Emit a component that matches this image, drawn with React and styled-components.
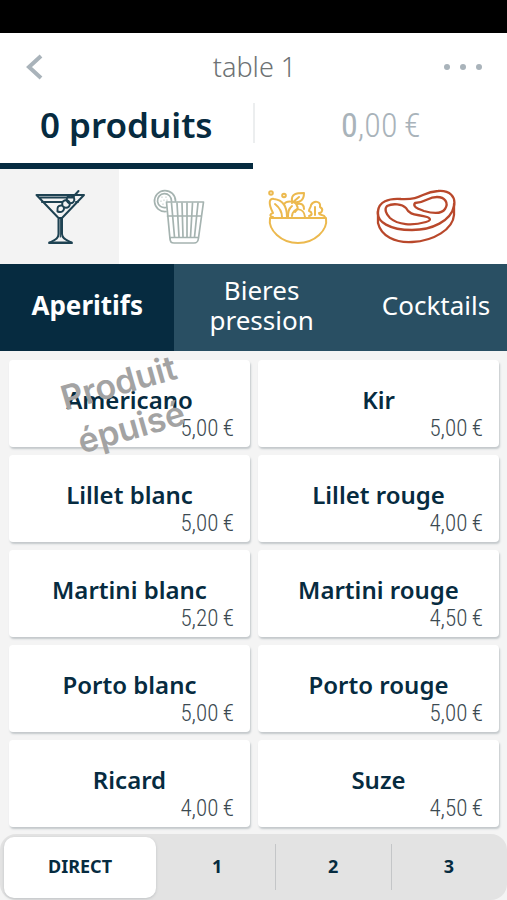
import React, { useState } from "react";
import styled, { createGlobalStyle, ThemeProvider } from "styled-components";

const theme = {
  navy: "#062b40",
  blue: "#294f63",
  muted: "#a9b3ba",
  page: "#f4f4f4",
  bar: "#e3e3e3",
  narrow: '"Roboto Condensed", Roboto, sans-serif',
};

const GlobalStyle = createGlobalStyle`
  * {
    box-sizing: border-box;
  }
  body {
    margin: 0;
    background: #f4f4f4;
    font-family: "Noto Sans", "Open Sans", sans-serif;
  }
  button {
    border: none;
    padding: 0;
    background: none;
    font-family: inherit;
    color: inherit;
    cursor: pointer;
  }
`;

const Page = styled.div`
  display: flex;
  flex-direction: column;
  min-height: 100vh;
  overflow: hidden;
  background: ${({ theme }) => theme.page};
  color: ${({ theme }) => theme.navy};
`;

const StatusBar = styled.div`
  height: 33px;
  background: #000;
`;

const Header = styled.header`
  display: grid;
  grid-template-columns: 1fr auto 1fr;
  align-items: center;
  height: 68px;
  padding: 0 24px 0 26px;
  background: #fff;
`;

const IconButton = styled.button`
  display: flex;
  align-items: center;
  justify-content: ${({ $end }) => ($end ? "flex-end" : "flex-start")};
  height: 44px;
  color: ${({ theme }) => theme.muted};
`;

const Title = styled.h1`
  margin: 0;
  text-align: center;
  font-size: 27px;
  line-height: 40px;
  font-weight: 300;
  color: #6d7274;
`;

const Summary = styled.div`
  display: flex;
  height: 68px;
  background: #fff;
`;

const SummaryTab = styled.button`
  flex: 1;
  display: flex;
  align-items: center;
  justify-content: center;
  border-bottom: 6px solid
    ${({ $active, theme }) => ($active ? theme.navy : "transparent")};
  padding-bottom: 14px;
  font-size: 35px;
  line-height: 48px;
  font-weight: 600;
`;

const Divider = styled.div`
  width: 2px;
  height: 40px;
  margin-top: 2px;
  background: #eceeef;
`;

const Total = styled.span`
  font-family: ${({ theme }) => theme.narrow};
  font-size: 34px;
  font-weight: 300;
  color: ${({ theme }) => theme.muted};
`;

const Families = styled.nav`
  display: flex;
  height: 95px;
  background: #fff;
`;

const FamilyTab = styled.button`
  flex: 0 0 23.5%;
  display: flex;
  align-items: center;
  justify-content: center;
  background: ${({ $active }) => ($active ? "#f3f3f3" : "#fff")};
  color: ${({ $color }) => $color};
`;

const Categories = styled.nav`
  display: flex;
  height: 87px;
  overflow: hidden;
  background: ${({ theme }) => theme.blue};
`;

const CategoryTab = styled.button`
  flex: 0 0 34.4%;
  padding: 0 24px 6px;
  font-size: 26px;
  line-height: 30px;
  font-weight: ${({ $active }) => ($active ? 700 : 400)};
  color: #fff;
  background: ${({ $active, theme }) => ($active ? theme.navy : theme.blue)};
`;

const Products = styled.main`
  flex: 1;
  display: grid;
  grid-template-columns: 1fr 1fr;
  grid-auto-rows: 87px;
  align-content: start;
  gap: 8px;
  padding: 9px 8px 7px 9px;
`;

const ProductCard = styled.button`
  position: relative;
  display: flex;
  flex-direction: column;
  justify-content: flex-end;
  padding: 0 16px 4px;
  border-radius: 4px;
  background: #fff;
  box-shadow: 1px 2px 2px #c3c8cb;
`;

const Name = styled.span`
  align-self: center;
  font-size: 24px;
  line-height: 30px;
  font-weight: 600;
  white-space: nowrap;
`;

const Price = styled.span`
  align-self: flex-end;
  font-family: ${({ theme }) => theme.narrow};
  font-size: 23px;
  line-height: 28px;
  font-weight: 300;
  color: #3b4951;
`;

const SoldOut = styled.span`
  position: absolute;
  inset: -6px 0 -8px;
  display: flex;
  align-items: center;
  padding-left: 50px;
`;

const SoldOutText = styled.span`
  width: 132px;
  font-family: Inter, "Liberation Sans", sans-serif;
  font-size: 34px;
  line-height: 46px;
  font-weight: 600;
  text-align: center;
  color: #a3a3a3;
  transform: rotate(-16deg);
`;

const Footer = styled.footer`
  display: flex;
  height: 66px;
  border-radius: 16px;
  background: ${({ theme }) => theme.bar};
`;

const DirectButton = styled.button`
  flex: 0 0 30%;
  margin: 3px 3px 2px 4px;
  padding-bottom: 3px;
  border-radius: 10px;
  background: #fff;
  box-shadow: 0 1px 3px #bfc2c4;
  font-size: 18px;
  font-weight: 700;
`;

const StepButton = styled.button`
  position: relative;
  flex: 1;
  padding-bottom: 3px;
  font-size: 18px;
  font-weight: 700;

  & + &::before {
    content: "";
    position: absolute;
    left: 0;
    top: 10px;
    bottom: 10px;
    width: 1px;
    background: #c4c6c8;
  }
`;

const Drawing = ({ w, children }) => (
  <svg
    width={w}
    height="56"
    viewBox={`0 0 ${w} 56`}
    fill="none"
    stroke="currentColor"
    strokeWidth="2"
    strokeLinecap="round"
    strokeLinejoin="round"
    aria-hidden="true"
  >
    {children}
  </svg>
);

const Martini = () => (
  <Drawing w={50}>
    <path d="M1.500 6H49L27 29H23.500ZM4 8.500H38M7 13H27M41 13H43M23.500 29V45C23.500 50 19 51 14 54H37C32 51 27 50 27 45V29" />
    <path d="M25.300 30V48M14 53H37" strokeWidth="1.200" />
    <path d="M43.500 2L38 8" />
    <circle cx="35.500" cy="10.500" r="3.800" />
    <circle cx="31" cy="15" r="3.800" />
    <path d="M27 16.500C23 16 22 18.500 22.500 22.500C27 24 29.500 21.500 29 18.500" />
  </Drawing>
);

const Tumbler = () => (
  <Drawing w={52}>
    <g strokeWidth="1.700">
      <path d="M13.500 13H50.500L45.500 49C45 53 44 54 41 54H21C18 54 17.500 53 17 50ZM14.500 27H48.500M17 48.500H45.500" />
      <path d="M18.500 14L21.500 48M24 14L26 48M29 14L30 48M34 14V48M39.500 14L37.500 48M45 14L41.500 48" />
      <path d="M13 22.500A10.500 10.500 0 1 1 22.500 12M13 18.500A7 7 0 1 1 18.500 12" />
      <path
        d="M9 8V8.100M13 8V8.100M8 12V12.100M11 11V11.100M10 15V15.100M14 11V11.100"
        strokeWidth="1.200"
      />
    </g>
  </Drawing>
);

const Salad = () => (
  <Drawing w={62}>
    <path d="M3 29H59C61 41 48 54 31 54S1 41 3 29Z" />
    <path d="M6 28C2 27 3 25 6 24C1 14 2 9 7 10C16 11 20 18 20 28M8 15C13 19 15 23 15 28" />
    <path d="M17 15C20 11 29 12 30 17C32 19 30 21 28 23M25 17C21 20 21 24 21 28" />
    <path d="M25 27C26 18 37 18 38 28M25 12C24 5 29 4 37 4C37 11 33 14 27 13M25 14L32 8" />
    <path d="M30 15C35 14 37 16 37 20M42 27C46 26 45 23 42 22C42 19 44 19 44 16C47 11 54 12 53 18C57 20 55 24 52 24C52 27 57 25 58 28M48 18V26" />
    <circle cx="4" cy="4" r="1.800" />
    <circle cx="17" cy="6.500" r="1.800" />
  </Drawing>
);

const Steak = () => (
  <Drawing w={82}>
    <g strokeWidth="2.300">
      <path d="M2 22C3 13 12 9 25 10C47 11 45 3 62 2C74 1 80 8 78 17C75 32 56 41 36 41C14 41 0 33 2 22Z" />
      <path d="M2 22V34C5 47 19 54 36 53C58 52 77 40 78 26V15" />
      <path d="M11 17C17 14 26 15 30 19C34 27 41 25 51 28C56 30 54 32 50 33C36 37 22 36 14 29C10 25 8 20 11 17Z" />
      <path d="M39 14C52 13 51 8 61 8C69 8 73 14 69 20C65 26 55 24 48 22C43 20 36 18 39 14Z" />
    </g>
  </Drawing>
);

const families = [
  { id: "drinks", label: "Apéritifs", color: "#1e4252", Icon: Martini },
  { id: "soft", label: "Softs", color: "#a5b3b0", Icon: Tumbler },
  { id: "salads", label: "Salades", color: "#ecb94e", Icon: Salad },
  { id: "meat", label: "Viandes", color: "#b9482b", Icon: Steak },
];

const categories = ["Aperitifs", "Bieres pression", "Cocktails"];

const products = [
  { name: "Americano", price: "5,00", soldOut: true },
  { name: "Kir", price: "5,00" },
  { name: "Lillet blanc", price: "5,00" },
  { name: "Lillet rouge", price: "4,00" },
  { name: "Martini blanc", price: "5,20" },
  { name: "Martini rouge", price: "4,50" },
  { name: "Porto blanc", price: "5,00" },
  { name: "Porto rouge", price: "5,00" },
  { name: "Ricard", price: "4,00" },
  { name: "Suze", price: "4,50" },
];

const App = () => {
  const [family, setFamily] = useState("drinks");
  const [category, setCategory] = useState("Aperitifs");

  return (
    <ThemeProvider theme={theme}>
      <GlobalStyle />
      <Page>
        <StatusBar />
        <Header>
          <IconButton aria-label="Retour">
            <svg width="18" height="26" viewBox="0 0 18 26" fill="none">
              <path
                d="M15 2L3 13L15 24"
                stroke="currentColor"
                strokeWidth="4"
              />
            </svg>
          </IconButton>
          <Title>table 1</Title>
          <IconButton $end aria-label="Options">
            <svg width="40" height="8" viewBox="0 0 40 8" fill="currentColor">
              <circle cx="4" cy="4" r="3" />
              <circle cx="20" cy="4" r="3" />
              <circle cx="36" cy="4" r="3" />
            </svg>
          </IconButton>
        </Header>

        <Summary>
          <SummaryTab $active>0 produits</SummaryTab>
          <Divider />
          <SummaryTab>
            <Total>
              <b>0</b>,00&thinsp;€
            </Total>
          </SummaryTab>
        </Summary>

        <Families>
          {families.map(({ id, label, color, Icon }) => (
            <FamilyTab
              key={id}
              aria-label={label}
              $active={family === id}
              $color={color}
              onClick={() => setFamily(id)}
            >
              <Icon />
            </FamilyTab>
          ))}
        </Families>

        <Categories>
          {categories.map((item) => (
            <CategoryTab
              key={item}
              $active={category === item}
              onClick={() => setCategory(item)}
            >
              {item}
            </CategoryTab>
          ))}
        </Categories>

        <Products>
          {products.map((product) => (
            <ProductCard key={product.name} disabled={product.soldOut}>
              <Name>{product.name}</Name>
              <Price>{product.price}&thinsp;€</Price>
              {product.soldOut && (
                <SoldOut>
                  <SoldOutText>Produit épuisé</SoldOutText>
                </SoldOut>
              )}
            </ProductCard>
          ))}
        </Products>

        <Footer>
          <DirectButton>DIRECT</DirectButton>
          <StepButton>1</StepButton>
          <StepButton>2</StepButton>
          <StepButton>3</StepButton>
        </Footer>
      </Page>
    </ThemeProvider>
  );
};

export default App;
